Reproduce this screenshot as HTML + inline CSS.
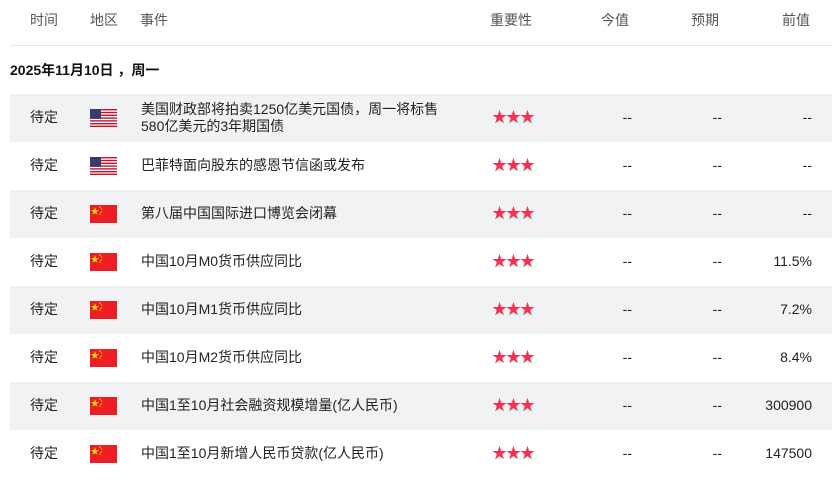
<!DOCTYPE html>
<html><head><meta charset="utf-8"><style>
body{margin:0;background:#fff;font-family:"Liberation Sans","Noto Sans CJK SC",sans-serif;font-size:14px;color:#222;width:832px;height:486px;overflow:hidden;position:relative}
.h{position:absolute;top:12px;color:#555;font-size:14px;line-height:17px}
.line{position:absolute;left:10px;right:0;top:45px;height:1px;background:#e6e6e6}
.date{position:absolute;left:10px;top:62px;font-weight:bold;font-size:14px;color:#111;line-height:17px}
.row{position:absolute;left:10px;right:0;height:48px}
.g{background:#f1f2f4}
.row span{position:absolute;line-height:17px}
.t{left:20px;top:15px}
.f{left:80px;top:15px;width:27px;height:18px}
.e{left:131px}
.s{left:482px;top:15px;color:#f2334f;font-size:15px;letter-spacing:-1px}
.c1{right:200px;top:15px}
.c2{right:110px;top:15px}
.c3{right:20px;top:15px}
</style></head><body>
<div class="h" style="left:30px">时间</div>
<div class="h" style="left:90px">地区</div>
<div class="h" style="left:140px">事件</div>
<div class="h" style="left:490px">重要性</div>
<div class="h" style="left:601px">今值</div>
<div class="h" style="left:691px">预期</div>
<div class="h" style="left:782px">前值</div>
<div class="line"></div>
<div class="date">2025年11月10日 ，周一</div>

<svg width="0" height="0" style="position:absolute"><defs>
<symbol id="us" viewBox="0 0 27 18"><rect width="27" height="18" fill="#fff"/><g fill="#c8102e"><rect y="0" width="27" height="1.4"/><rect y="2.8" width="27" height="1.4"/><rect y="5.6" width="27" height="1.4"/><rect y="8.4" width="27" height="1.4"/><rect y="11.2" width="27" height="1.4"/><rect y="14" width="27" height="1.4"/><rect y="16.6" width="27" height="1.4"/></g><rect width="11" height="9.8" fill="#3c3b6e"/></symbol>
<symbol id="cn" viewBox="0 0 27 18"><rect width="27" height="18" fill="#ee1c25"/><polygon fill="#ffde00" points="5,2 6,5 9,5 6.6,6.8 7.5,9.8 5,8 2.5,9.8 3.4,6.8 1,5 4,5"/><circle cx="10" cy="2" r=".8" fill="#ffde00"/><circle cx="11.5" cy="4" r=".8" fill="#ffde00"/><circle cx="11.5" cy="7" r=".8" fill="#ffde00"/><circle cx="10" cy="9" r=".8" fill="#ffde00"/></symbol>
</defs></svg>

<div class="row g" style="top:94px"><span class="t">待定</span><svg class="f" style="position:absolute"><use href="#us"/></svg><span class="e" style="top:7px">美国财政部将拍卖1250亿美元国债，周一将标售<br>580亿美元的3年期国债</span><span class="s">★★★</span><span class="c1">--</span><span class="c2">--</span><span class="c3">--</span></div>
<div class="row" style="top:142px"><span class="t">待定</span><svg class="f" style="position:absolute"><use href="#us"/></svg><span class="e" style="top:15px">巴菲特面向股东的感恩节信函或发布</span><span class="s">★★★</span><span class="c1">--</span><span class="c2">--</span><span class="c3">--</span></div>
<div class="row g" style="top:190px"><span class="t">待定</span><svg class="f" style="position:absolute"><use href="#cn"/></svg><span class="e" style="top:15px">第八届中国国际进口博览会闭幕</span><span class="s">★★★</span><span class="c1">--</span><span class="c2">--</span><span class="c3">--</span></div>
<div class="row" style="top:238px"><span class="t">待定</span><svg class="f" style="position:absolute"><use href="#cn"/></svg><span class="e" style="top:15px">中国10月M0货币供应同比</span><span class="s">★★★</span><span class="c1">--</span><span class="c2">--</span><span class="c3">11.5%</span></div>
<div class="row g" style="top:286px"><span class="t">待定</span><svg class="f" style="position:absolute"><use href="#cn"/></svg><span class="e" style="top:15px">中国10月M1货币供应同比</span><span class="s">★★★</span><span class="c1">--</span><span class="c2">--</span><span class="c3">7.2%</span></div>
<div class="row" style="top:334px"><span class="t">待定</span><svg class="f" style="position:absolute"><use href="#cn"/></svg><span class="e" style="top:15px">中国10月M2货币供应同比</span><span class="s">★★★</span><span class="c1">--</span><span class="c2">--</span><span class="c3">8.4%</span></div>
<div class="row g" style="top:382px"><span class="t">待定</span><svg class="f" style="position:absolute"><use href="#cn"/></svg><span class="e" style="top:15px">中国1至10月社会融资规模增量(亿人民币)</span><span class="s">★★★</span><span class="c1">--</span><span class="c2">--</span><span class="c3">300900</span></div>
<div class="row" style="top:430px"><span class="t">待定</span><svg class="f" style="position:absolute"><use href="#cn"/></svg><span class="e" style="top:15px">中国1至10月新增人民币贷款(亿人民币)</span><span class="s">★★★</span><span class="c1">--</span><span class="c2">--</span><span class="c3">147500</span></div>
</body></html>
